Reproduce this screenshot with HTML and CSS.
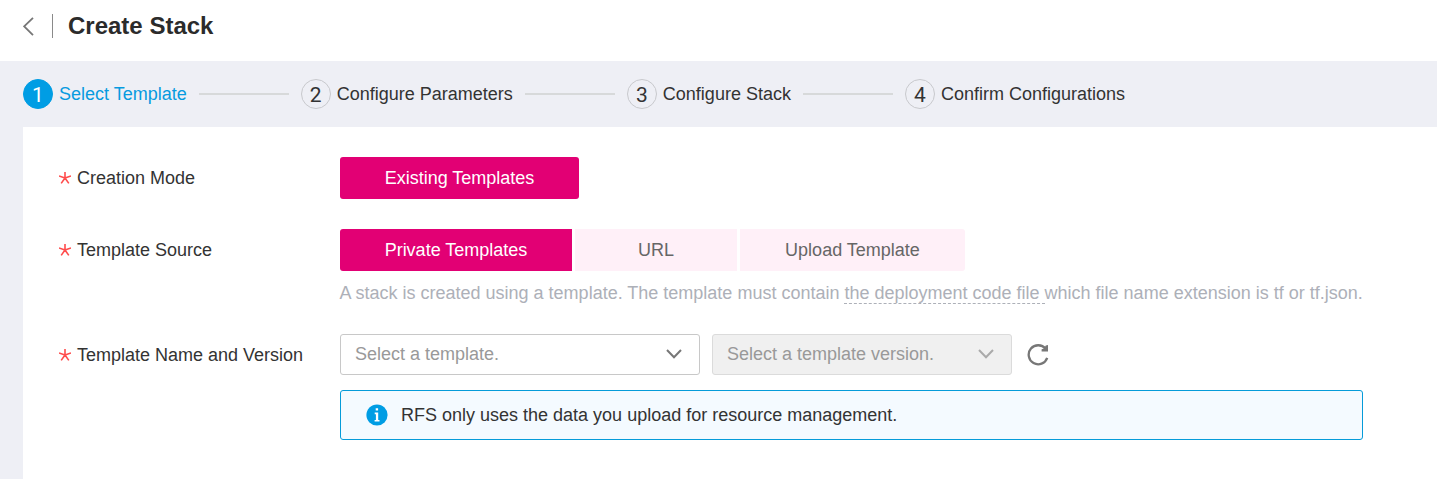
FILE: index.html
```html
<!DOCTYPE html>
<html lang="en">
<head>
<meta charset="utf-8">
<title>Create Stack</title>
<link rel="stylesheet" href="styles.css">
</head>
<body>
<svg class="defs" aria-hidden="true">
  <symbol id="required" viewBox="0 0 12 12"><path d="M6 6V0M6 6L0 4M6 6L12 4M6 6L2.2 11.4M6 6L9.8 11.4"/></symbol>
  <symbol id="chevron" viewBox="0 0 16 10"><path d="M1 1L8 8.2L15 1"/></symbol>
</svg>
<header class="header">
  <svg class="back" viewBox="0 0 11 19"><path d="M10 .8L1.2 9.4L10 18.2"/></svg>
  <span class="divider"></span>
  <h1 class="title">Create Stack</h1>
</header>
<nav class="steps">
  <div class="step active"><span class="num">1</span><span class="name">Select Template</span></div>
  <span class="line"></span>
  <div class="step"><span class="num">2</span><span class="name">Configure Parameters</span></div>
  <span class="line"></span>
  <div class="step"><span class="num">3</span><span class="name">Configure Stack</span></div>
  <span class="line"></span>
  <div class="step"><span class="num">4</span><span class="name">Confirm Configurations</span></div>
</nav>
<main class="panel">
  <div class="row">
    <div class="label"><svg class="required"><use href="#required"/></svg>Creation Mode</div>
    <div class="tabs"><button class="tab selected existing">Existing Templates</button></div>
  </div>
  <div class="row source">
    <div class="label"><svg class="required"><use href="#required"/></svg>Template Source</div>
    <div class="field">
      <div class="tabs">
        <button class="tab selected private">Private Templates</button>
        <button class="tab url">URL</button>
        <button class="tab upload">Upload Template</button>
      </div>
      <p class="hint">A stack is created using a template. The template must contain <span class="term">the deployment code file </span>which file name extension is tf or tf.json.</p>
    </div>
  </div>
  <div class="row">
    <div class="label"><svg class="required"><use href="#required"/></svg>Template Name and Version</div>
    <div class="field">
      <div class="selects">
        <div class="select template">Select a template.<svg class="chevron"><use href="#chevron"/></svg></div>
        <div class="select version">Select a template version.<svg class="chevron"><use href="#chevron"/></svg></div>
        <svg class="refresh" viewBox="0 0 22 22"><path class="arc" d="M18.6 4.8A9.5 9.5 0 1 0 20.2 13.8"/><path class="head" d="M21 1V7.4H14.6V5.2L17 4.4L18.8 1.4Z"/></svg>
      </div>
      <div class="notice">
        <svg class="info" viewBox="0 0 22 22"><circle cx="11" cy="11" r="10.6"/><path d="M9.7 4.2H12.1V6.6H9.7ZM8.7 8.6H12.2V16H13.5V17.6H8.6V16H9.9V10.2H8.7Z"/></svg>
        <span>RFS only uses the data you upload for resource management.</span>
      </div>
    </div>
  </div>
</main>
</body>
</html>
```
FILE: styles.css
```css
* { box-sizing: border-box; }
body {
  margin: 0;
  height: 479px;
  overflow: hidden;
  display: flex;
  flex-direction: column;
  background: #eeeff5;
  color: #333;
  font: 18px/26px "Liberation Sans", Arial, sans-serif;
}
.defs { position: absolute; width: 0; height: 0; }
svg { flex: none; fill: none; }
.header { height: 61px; padding: 0 0 9px 23px; display: flex; align-items: center; background: #fff; }
.back { width: 11px; height: 19px; stroke: #777; stroke-width: 1.8; }
.divider { width: 1px; height: 24px; margin: 0 15px 0 18px; background: #8a8a8a; }
.title { margin: 0; font-size: 24px; line-height: 30px; color: #2b2b2b; }
.steps { height: 66px; padding-left: 23px; display: flex; align-items: center; }
.step { display: flex; align-items: center; gap: 6px; }
.num {
  width: 30px;
  height: 30px;
  border: 1px solid #c8c9cd;
  border-radius: 50%;
  text-align: center;
  font: 21px/30px Roboto, sans-serif;
}
.active { color: #069be0; }
.active .num { border-color: #009de4; background: #009de4; color: #fff; }
.line { width: 90px; height: 2px; margin: 0 12px; background: #d7d9da; }
.panel { flex: 1; margin-left: 23px; padding: 30px 0 0 36px; background: #fff; }
.row { display: flex; margin-bottom: 30px; }
.label { width: 281px; height: 42px; display: flex; align-items: center; gap: 6px; white-space: nowrap; }
.required { width: 12px; height: 12px; stroke: #ff4c4c; stroke-width: 1.6; }
.source { margin-bottom: 28px; }
.tabs { display: flex; gap: 3px; }
.tab { height: 42px; padding: 0; border: 0; background: #fff0f8; color: #666; font: inherit; }
.selected { background: #e20074; color: #fff; }
.existing { width: 239px; border-radius: 3px; }
.private { width: 232px; border-radius: 3px 0 0 3px; }
.url { width: 162px; }
.upload { width: 225px; border-radius: 0 3px 3px 0; }
.hint { margin: 9px 0 0 -.5px; color: #adb0b8; white-space: nowrap; line-height: 26px; }
.term { display: inline-block; height: 24px; white-space: pre; border-bottom: 1px dashed #adb0b8; vertical-align: top; }
.selects { display: flex; align-items: center; }
.select {
  height: 41px;
  padding: 0 17px 2px 14px;
  display: flex;
  align-items: center;
  justify-content: space-between;
  border: 1px solid #c8c8c8;
  border-radius: 3px;
  color: #999;
}
.template { width: 360px; margin-right: 12px; }
.version { width: 300px; margin-right: 15px; background: #f0f0f0; border-color: #dbdbdb; }
.chevron { width: 16px; height: 10px; stroke: #777; stroke-width: 2; }
.version .chevron { stroke: #aaa; }
.refresh { width: 22px; height: 22px; }
.arc { stroke: #777; stroke-width: 2.3; }
.head { fill: #777; }
.notice {
  width: 1023px;
  height: 50px;
  margin-top: 15px;
  padding-left: 25px;
  display: flex;
  align-items: center;
  gap: 13px;
  border: 1px solid #059bd9;
  border-radius: 3px;
  background: #f4faff;
}
.info { width: 22px; height: 22px; }
.info circle { fill: #009de4; }
.info path { fill: #fff; }
```
